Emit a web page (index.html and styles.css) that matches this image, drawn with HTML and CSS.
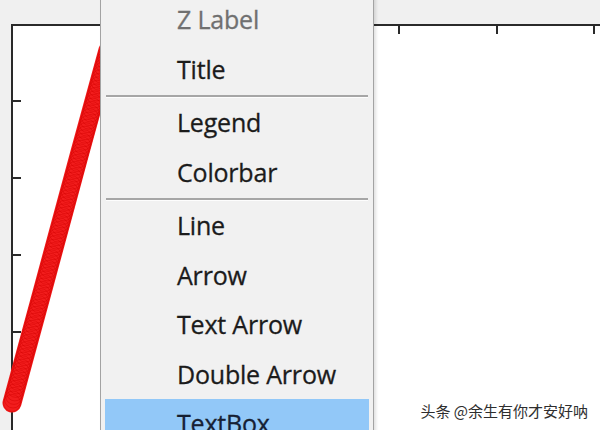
FILE: index.html
```html
<!DOCTYPE html>
<html lang="en">
<head>
  <meta charset="UTF-8">
  <title>Figure - Insert menu</title>
  <link rel="stylesheet" href="styles.css">
</head>
<body>
  <div class="figure">
    <div class="axes"></div>

    <svg class="plot" width="600" height="430" viewBox="0 0 600 430">
      <g class="ticks">
        <line x1="12" y1="101" x2="21" y2="101"/>
        <line x1="12" y1="178" x2="21" y2="178"/>
        <line x1="12" y1="255" x2="21" y2="255"/>
        <line x1="12" y1="332" x2="21" y2="332"/>
        <line x1="399" y1="25" x2="399" y2="34"/>
        <line x1="497" y1="25" x2="497" y2="34"/>
        <line x1="594" y1="25" x2="594" y2="34"/>
      </g>
      <path class="trace" d="M12 403 L40 300 L80 152 L108 50"/>
      <g id="markers" class="markers"></g>
    </svg>

    <ul class="menu">
      <li class="item disabled">Z Label</li>
      <li class="item">Title</li>
      <li class="sep"></li>
      <li class="item">Legend</li>
      <li class="item">Colorbar</li>
      <li class="sep"></li>
      <li class="item">Line</li>
      <li class="item">Arrow</li>
      <li class="item">Text Arrow</li>
      <li class="item">Double Arrow</li>
      <li class="item active">TextBox</li>
    </ul>

    <div class="watermark">头条 @余生有你才安好呐</div>
  </div>

  <script>
    // circle markers along the line, dense like plot(x, y, 'o')
    const markers = document.getElementById("markers");
    const x0 = 12, y0 = 403, x1 = 108, y1 = 50;
    for (let t = 0; t <= 1; t += 0.01) {
      const c = document.createElementNS("http://www.w3.org/2000/svg", "circle");
      c.setAttribute("cx", (x0 + (x1 - x0) * t).toFixed(1));
      c.setAttribute("cy", (y0 + (y1 - y0) * t).toFixed(1));
      c.setAttribute("r", 8.5);
      markers.appendChild(c);
    }
  </script>
</body>
</html>
```

FILE: styles.css
```css
* {
  box-sizing: border-box;
  margin: 0;
  padding: 0;
}

body {
  width: 600px;
  height: 430px;
  overflow: hidden;
  background: #f0f0f0;
  font-family: 'Open Sans', 'Noto Sans', sans-serif;
}

.figure {
  position: relative;
  height: 430px;
  padding: 24px 0 0 11px;
}

.axes {
  height: 100%;
  background: #fff;
  border-top: 2px solid #2a2a2a;
  border-left: 2px solid #2a2a2a;
}

.plot {
  position: absolute;
  top: 0;
  left: 0;
}

.ticks line {
  stroke: #2a2a2a;
  stroke-width: 2;
}

.trace {
  fill: none;
  stroke: #f21d1d;
  stroke-width: 19;
  stroke-linecap: round;
}

.markers circle {
  fill: none;
  stroke: #d20000;
  stroke-width: 1;
  opacity: 0.45;
}

.menu {
  position: absolute;
  top: -6px;
  left: 100px;
  width: 274px;
  list-style: none;
  background: #f1f1f1;
  border: 1px solid #a3a3a3;
  padding: 0 4px;
  box-shadow: 2px 2px 3px rgba(0, 0, 0, 0.12);
}

.item {
  height: 49.5px;
  line-height: 49.5px;
  padding-left: 72px;
  font-size: 25px;
  letter-spacing: -0.2px;
  color: #1b1b1b;
  -webkit-text-stroke: 0.3px #1b1b1b;
  white-space: nowrap;
}

.item.disabled {
  color: #707070;
  -webkit-text-stroke: 0.3px #707070;
}

.item.active {
  background: #92c8f8;
  color: #14213a;
}

.sep {
  height: 4px;
  padding-top: 1px;
  margin: 0 1px;
}

.sep::before {
  content: "";
  display: block;
  height: 2px;
  background: #a6a6a6;
  border-bottom: 1px solid #fdfdfd;
  box-sizing: content-box;
}

.watermark {
  position: absolute;
  right: 12px;
  bottom: 9px;
  font-family: 'Noto Sans CJK SC', sans-serif;
  font-size: 15px;
  color: #2e2e2e;
  text-shadow: 0 0 2px #fff, 0 0 2px #fff;
}
```
